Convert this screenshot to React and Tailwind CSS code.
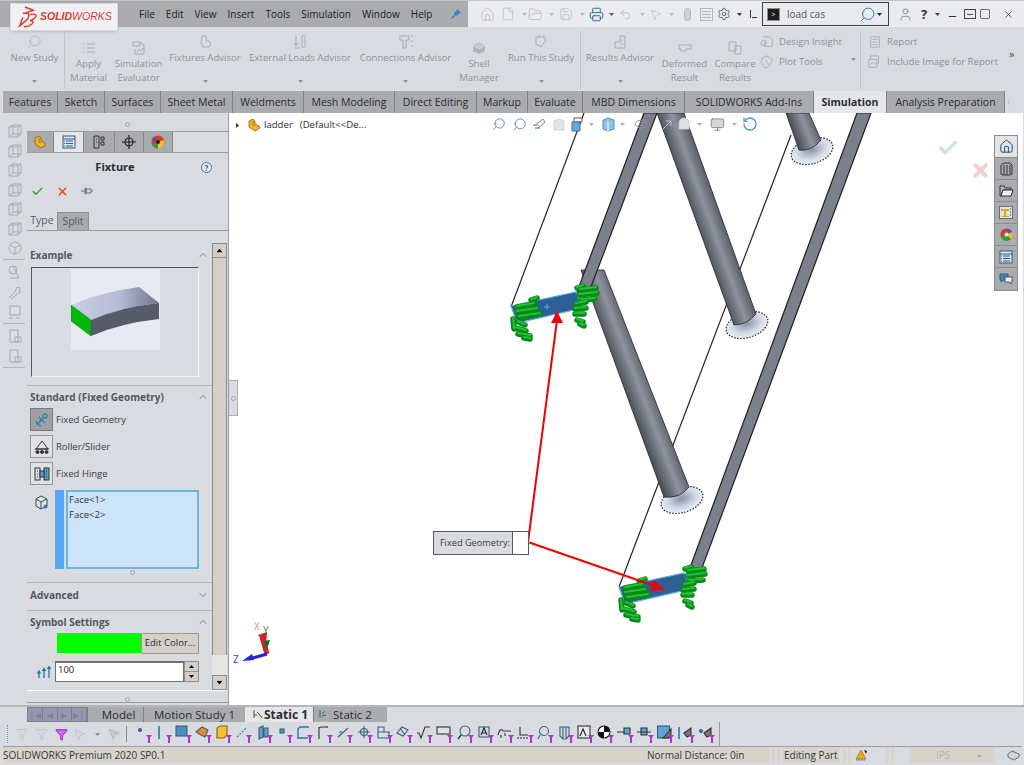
import {
  House, File, FolderOpen, Save, Printer, Undo2, MousePointer2, Settings, User, Search,
  Monitor, RotateCw, Eye, ChevronUp, ChevronDown, Check, X, Funnel, Minus, Square,
} from "lucide-react";

const Caret = ({ className = "" }) => (
  <svg width="5" height="3" viewBox="0 0 5 3" className={className}>
    <path d="M0 0h5L2.5 3z" fill="currentColor" />
  </svg>
);

const Ghost = ({ children, size = 16 }) => (
  <svg width={size} height={size} viewBox="0 0 16 16" fill="none" stroke="#a8acb2" strokeWidth="1">
    {children}
  </svg>
);

const Cube = () => (
  <Ghost>
    <path d="M2 4l4-2h8v9l-3 3H2z M2 4h9v10 M11 4l3-2 M6 2v9h8 M2 14l4-3" />
  </Ghost>
);

// ribbon big button, label on one or two lines
const RibbonBtn = ({ w, lines, icon, arrow }) => (
  <div className={`${w} h-full flex flex-col items-center text-[#8f9399] leading-[14px]`}>
    <div className={`${lines.length > 1 ? "mt-[12px] h-[17px]" : "mt-[6px] h-[17px]"} flex items-center`}>{icon}</div>
    <div className="mt-[1px] text-center whitespace-nowrap">
      {lines.map((l) => (
        <div key={l}>{l}</div>
      ))}
    </div>
    {arrow && <Caret className="mt-[15px] text-[#8f9399]" />}
  </div>
);

const RibbonSep = () => <div className="w-px h-[58px] mt-[4px] bg-[#c3c6cb]" />;

const ribbonTabs = [
  ["Features", "w-[55px]"],
  ["Sketch", "w-[47px]"],
  ["Surfaces", "w-[56px]"],
  ["Sheet Metal", "w-[72px]"],
  ["Weldments", "w-[71px]"],
  ["Mesh Modeling", "w-[91px]"],
  ["Direct Editing", "w-[82px]"],
  ["Markup", "w-[51px]"],
  ["Evaluate", "w-[55px]"],
  ["MBD Dimensions", "w-[102px]"],
  ["SOLIDWORKS Add-Ins", "w-[129px]"],
  ["Simulation", "w-[73px]"],
  ["Analysis Preparation", "w-[118px]"],
];

const TitleBar = () => (
  <div className="h-[27px] flex border-t border-[#c4c6ca] relative">
    <div className="w-[468px] bg-[#a9abaf] flex items-center text-[#1c1c1c] text-[10px] pl-[139px]">
      <div className="flex gap-[11px]">
        {["File", "Edit", "View", "Insert", "Tools", "Simulation", "Window", "Help"].map((m) => (
          <span key={m}>{m}</span>
        ))}
      </div>
      <svg width="12" height="12" viewBox="0 0 12 12" className="ml-[18px]">
        <path d="M7 1l4 4-2 .5L7 8 6 7 2 11l-1-1 4-4-1-1 2.500-2z" fill="#2a86c8" />
      </svg>
    </div>
    {/* quick access */}
    <div className="flex-1 bg-[#eaebef] flex items-center pl-[12px] text-[#b4b7bc] relative">
      <House size={15} strokeWidth={1.2} />
      <File size={14} strokeWidth={1.2} className="ml-[6px]" />
      <Caret className="ml-[7px]" />
      <FolderOpen size={15} strokeWidth={1.2} className="ml-[1px]" />
      <Caret className="ml-[6px]" />
      <Save size={14} strokeWidth={1.2} className="ml-[5px]" />
      <Caret className="ml-[7px]" />
      <Printer size={15} strokeWidth={1.6} className="ml-[4px] text-[#2f6ea8]" />
      <Caret className="ml-[5px] text-[#555]" />
      <Undo2 size={13} strokeWidth={1.4} className="ml-[5px]" />
      <Caret className="ml-[8px]" />
      <MousePointer2 size={13} strokeWidth={1.2} className="ml-[4px]" />
      <Caret className="ml-[7px]" />
      <div className="ml-[10px] w-[7px] h-[13px] rounded-full border border-[#b4b7bc] bg-[#cfd1d5]" />
      <div className="ml-[9px] w-[13px] h-[13px] border border-[#b4b7bc] flex flex-col justify-around p-[1px]">
        <div className="h-px bg-[#b4b7bc]" />
        <div className="h-px bg-[#b4b7bc]" />
        <div className="h-px bg-[#b4b7bc]" />
      </div>
      <Settings size={14} strokeWidth={1.4} className="ml-[4px] text-[#4a4d52]" />
      <Caret className="ml-[6px] text-[#333]" />
      <div className="ml-[8px] flex items-end h-[8px] gap-px">
        <div className="w-px h-[8px] bg-[#333]" />
        <div className="w-[5px] h-px bg-[#333]" />
      </div>
      {/* search box */}
      <div className="ml-[5px] w-[127px] h-[24px] border-[1.5px] border-[#3c3f44] bg-[#e9eaee] flex items-center pl-[4px] text-[#54585e] text-[10px]">
        <div className="w-[13px] h-[13px] bg-[#1d1d1d] border border-[#8b8d90] flex items-center justify-center text-white text-[7px] leading-none">
          &gt;
        </div>
        <span className="ml-[7px] w-[72px]">load cas</span>
        <Search size={17} strokeWidth={1.4} className="text-[#2b78bd] -scale-x-100" />
        <Caret className="ml-[1px] text-[#222]" />
      </div>
      <User size={15} strokeWidth={1.1} className="ml-[9px] text-[#6d7076]" />
      <span className="ml-[8px] font-bold text-[13px] text-[#333] leading-none">?</span>
      <Caret className="ml-[8px] text-[#444]" />
      <Minus size={11} strokeWidth={2.6} className="ml-[7px] text-[#333] mt-[5px]" />
      <div className="ml-[6px] w-[12px] h-[10px] border border-[#444] flex items-center justify-center">
        <div className="w-[6px] h-px bg-[#444]" />
      </div>
      <Square size={12} strokeWidth={1.4} className="ml-[3px] text-[#333]" />
      <X size={11} strokeWidth={1.6} className="ml-[12px] text-[#333]" />
    </div>
    {/* logo tab hangs over the ribbon */}
    <div className="absolute left-[10px] top-[2px] w-[108px] h-[28px] bg-[#f1f1f3] border border-[#d6d7da] shadow-sm flex items-center pl-[4px]">
      <svg width="25" height="22" viewBox="0 0 23 21" fill="none" stroke="#dd3a33" strokeWidth="1.4">
        <path d="M9 1l8 3-8 3M7 7h4c3 0 2 5 -1 7l-6 5 3-8M14 8c6-1 7 1 4 4l-4 2c4 0 4 2 -1 5l-5 1" />
      </svg>
      <span className="font-['Liberation_Sans'] italic text-[10.5px] text-[#dd3a33]">
        <b>SOLID</b>WORKS
      </span>
    </div>
  </div>
);

const Ribbon = () => (
  <div className="h-[64px] flex pl-[5px] text-[9.6px] bg-[#d8dbe0] shrink-0">
    <RibbonBtn w="w-[59px]" lines={["New Study"]} arrow icon={<Search size={15} strokeWidth={1.4} className="text-[#b4b7bc] -scale-x-100" />} />
    <RibbonSep />
    <RibbonBtn w="w-[47px]" lines={["Apply", "Material"]} icon={<Ghost><path d="M2 4h1M2 8h1M2 12h1M6 4h8M6 8h8M6 12h8" /></Ghost>} />
    <RibbonBtn w="w-[53px]" lines={["Simulation", "Evaluator"]} icon={<Ghost><path d="M2 2h7l4 3v9H4V9M2 2v4h7V2" /><path d="M6 12l2-3 2 2 2-3" /></Ghost>} />
    <RibbonBtn w="w-[80px]" lines={["Fixtures Advisor"]} arrow icon={<Ghost><path d="M5 2h4v5h3l2 3-2 3H6l-2-4z" /></Ghost>} />
    <RibbonBtn w="w-[110px]" lines={["External Loads Advisor"]} arrow icon={<Ghost><path d="M4 2v9M2 9l2 3 2-3M2 14h6M10 3a1.500 1.500 0 013 0v7a2 2 0 11-3 0z" /></Ghost>} />
    <RibbonBtn w="w-[101px]" lines={["Connections Advisor"]} arrow icon={<Ghost><path d="M2 2h9v4H8v8H5V6H2zM13 2h2M13 7h2M13 12h2" /></Ghost>} />
    <RibbonBtn w="w-[46px]" lines={["Shell", "Manager"]} icon={<svg width="14" height="14" viewBox="0 0 14 14"><path d="M7 1l6 3-6 3-6-3z" fill="#c2c5ca" /><path d="M1 5l6 3 6-3v5l-6 3-6-3z" fill="#b1b4b9" /></svg>} />
    <RibbonBtn w="w-[78px]" lines={["Run This Study"]} arrow icon={<Ghost><path d="M3 3h7l3 3-5 7-5-3z M6 1v3M10 1l2 2" /></Ghost>} />
    <RibbonSep />
    <RibbonBtn w="w-[78px]" lines={["Results Advisor"]} arrow icon={<Ghost><path d="M8 2h5v12H3V8h5zM10 5v2M10 9v2" /></Ghost>} />
    <RibbonBtn w="w-[51px]" lines={["Deformed", "Result"]} icon={<svg width="14" height="8" viewBox="0 0 14 8"><path d="M1 1h12v4H8v2H3V5H1z" fill="none" stroke="#a8acb2" /></svg>} />
    <RibbonBtn w="w-[50px]" lines={["Compare", "Results"]} icon={<Ghost><path d="M2 2h7v9H2zM8 6h6v8H8z" /></Ghost>} />
    <div className="w-[100px] flex flex-col pt-[8px] gap-[6px] text-[#8f9399] leading-[14px] relative">
      <div className="flex items-center gap-[4px]">
        <Ghost size={14}><path d="M3 2h8l3 3v8H5V8M1 9a3 3 0 116 0 3 3 0 01-6 0" /></Ghost>
        <span className="ml-[1px]">Design Insight</span>
      </div>
      <div className="flex items-center gap-[4px]">
        <Ghost size={14}><path d="M3 3l5-2 6 4-3 8-5 2-5-6z M6 5l4 6" /></Ghost>
        <span className="ml-[1px]">Plot Tools</span>
        <Caret className="absolute left-[91px] top-[31px]" />
      </div>
    </div>
    <RibbonSep />
    <div className="w-[140px] flex flex-col pt-[8px] gap-[6px] text-[#8f9399] leading-[14px] pl-[7px]">
      <div className="flex items-center">
        <Ghost size={14}><path d="M3 2h10v12H3zM5 5h6M5 8h6M5 11h6" /></Ghost>
        <span className="ml-[5px]">Report</span>
      </div>
      <div className="flex items-center">
        <Ghost size={14}><path d="M3 4V1h9v9h-2M1 5h9v9H1z M3 11l2-3 3 3" /></Ghost>
        <span className="ml-[5px] whitespace-nowrap">Include Image for Report</span>
      </div>
    </div>
    <span className="ml-[8px] mt-[19px] text-[#55585d] text-[11px]">»</span>
  </div>
);

const Tabs = () => (
  <div className="h-[22px] flex shrink-0 pl-[3px] text-[10.5px] text-[#2b2d30]">
    {ribbonTabs.map(([name, w]) => (
      <div
        key={name}
        className={`${w} flex items-center justify-center pt-px whitespace-nowrap border-r border-[#7f8185] ${
          name === "Simulation" ? "bg-[#e4e6ea] font-bold" : "bg-[#a9abaf]"
        }`}
      >
        {name}
      </div>
    ))}
    <div className="flex-1 flex items-center pl-[2px] text-[#b5b7bb] bg-[#d8dbe0]">‹</div>
  </div>
);

const SideStrip = () => (
  <div className="w-[27px] pl-[7px] flex flex-col items-start pt-[10px] shrink-0">
    <div className="flex flex-col gap-[3.5px]">
      <Cube /><Cube /><Cube /><Cube /><Cube /><Cube />
      <Ghost><circle cx="8" cy="8" r="6" /><path d="M3 5l5 3 5-3M8 8v6" /></Ghost>
    </div>
    <div className="w-[22px] h-px bg-[#b4b7bb] -ml-[4px] mt-[3px] mb-[4px]" />
    <div className="flex flex-col gap-[4px]">
      <Ghost><circle cx="6" cy="6" r="4" /><path d="M6 2l6 12H3" /></Ghost>
      <Ghost><path d="M2 14l6-6 2-5 3 1-1 3 2 1-5 3-5 4" /></Ghost>
      <Ghost><path d="M3 2h10v9H3zM2 14h4M9 14h4" /></Ghost>
    </div>
    <div className="w-[22px] h-px bg-[#b4b7bb] -ml-[4px] mt-[3px] mb-[4px]" />
    <div className="flex flex-col gap-[3.5px]">
      <Ghost><path d="M3 2h8v12H3zM8 9h6v5H8z" /></Ghost>
      <Ghost><path d="M3 2h8v12H3zM8 9h6v5H8z" /></Ghost>
    </div>
    <div className="w-[22px] h-px bg-[#b4b7bb] -ml-[4px] mt-[3px]" />
  </div>
);

const Handle = ({ className = "" }) => <div className={`w-[5px] h-[5px] rounded-full border border-[#a4a6aa] ${className}`} />;

const PartIcon = ({ size = 14 }) => (
  <svg width={size} height={size} viewBox="0 0 14 14">
    <path d="M2 3l4-2 2 2v3l4 2 1 2-5 3-6-4z" fill="#f0b429" stroke="#8a6200" strokeWidth="0.8" />
    <path d="M6 3v4l2 1" fill="none" stroke="#8a6200" strokeWidth="0.7" />
  </svg>
);

const PanelTabs = () => (
  <div className="h-[22px] border-t border-[#9c9ea2] border-b flex">
    <div className="w-[27px] bg-[#a9abaf] flex items-center justify-center border-r border-[#85878b]"><PartIcon /></div>
    <div className="w-[30px] bg-[#e4e6ea] flex items-center justify-center border-r border-[#85878b]">
      <svg width="14" height="14" viewBox="0 0 14 14" fill="none"><rect x="1" y="1" width="12" height="12" fill="#dfe7ef" stroke="#2d5c80" /><path d="M1 4h12M4 6h7M4 8.500h7M4 11h7" stroke="#2d5c80" /><path d="M2 6h1M2 8.500h1M2 11h1" stroke="#2d7fc0" /></svg>
    </div>
    <div className="w-[31px] bg-[#a9abaf] flex items-center justify-center border-r border-[#85878b]">
      <svg width="14" height="14" viewBox="0 0 14 14" fill="none" stroke="#333"><path d="M2 1h5v12H2zM9 2h3v3H9zM9 7h3v3H9zM4 4h1M4 7h1" /></svg>
    </div>
    <div className="w-[29px] bg-[#a9abaf] flex items-center justify-center border-r border-[#85878b]">
      <svg width="14" height="14" viewBox="0 0 14 14" fill="none" stroke="#222" strokeWidth="1.200"><circle cx="7" cy="7" r="4" /><path d="M7 0v14M0 7h14" /></svg>
    </div>
    <div className="w-[29px] bg-[#a9abaf] flex items-center justify-center border-r border-[#85878b]">
      <svg width="14" height="14" viewBox="0 0 14 14"><circle cx="7" cy="7" r="6.500" fill="#e03a2f" /><path d="M7 7L1 9a6.500 6.500 0 006 4.500z" fill="#3a9a3f" /><path d="M7 7l6-2a6.500 6.500 0 01-6 8.500z" fill="#f2c230" /><path d="M7 7L1 5a6.500 6.500 0 012-3.500z" fill="#2a5fc0" /><circle cx="7" cy="7" r="2" fill="#222" /></svg>
    </div>
  </div>
);

const SectionHead = ({ title, open = true }) => (
  <div className="h-[16px] flex items-center justify-between pl-[3px] pr-[3px] font-bold text-[#515862] text-[10px]">
    <span>{title}</span>
    {open ? <ChevronUp size={12} strokeWidth={1.6} className="text-[#6c7077]" /> : <ChevronDown size={12} strokeWidth={1.6} className="text-[#6c7077]" />}
  </div>
);

const OptionRow = ({ active, label, icon, className = "" }) => (
  <div className={`flex items-center pl-[3px] ${className}`}>
    <div className={`w-[23px] h-[23px] flex items-center justify-center border ${active ? "bg-[#9ea0a4] border-[#77797d]" : "bg-[#e0e2e6] border-[#94969a]"}`}>
      {icon}
    </div>
    <span className="ml-[3px] mt-[2px] text-[#3b3e42] text-[9.5px]">{label}</span>
  </div>
);

const PropertyPanel = () => (
  <div className="w-[202px] shrink-0 border-r border-[#9a9c9f] flex flex-col relative">
    <div className="h-[18px] flex items-center justify-center pt-[4px]"><Handle /></div>
    <PanelTabs />
    {/* title */}
    <div className="h-[29px] flex items-center">
      <span className="ml-[65px] w-[46px] text-center font-bold text-[11px] text-[#2b2d30]">Fixture</span>
      <div className="ml-[63px] w-[11px] h-[11px] rounded-full border border-[#4b6f8c] bg-[#e6eef4] flex items-center justify-center text-[8px] font-bold text-[#2d5c80] leading-none">?</div>
    </div>
    {/* ok cancel pin */}
    <div className="h-[18px] flex items-center pl-[4px]">
      <Check size={13} strokeWidth={2.6} className="text-[#3aa033]" />
      <X size={13} strokeWidth={2.6} className="ml-[12px] text-[#e8401c]" />
      <svg width="12" height="8" viewBox="0 0 12 8" className="ml-[12px]"><path d="M0 4h4M4 1h1v6H4zM5 2h5v4H5zM10 4h2" stroke="#6f7378" fill="none" /></svg>
    </div>
    {/* type split */}
    <div className="mt-[11px] h-[20px] flex border-b border-[#9c9ea2] text-[10.5px] pt-px">
      <div className="w-[30px] flex items-center justify-center text-[#555a60]">Type</div>
      <div className="w-[32px] bg-[#a9abaf] border border-[#8f9195] border-b-0 flex items-center justify-center text-[#5a5e64]">Split</div>
    </div>
    <div className="flex flex-1">
      {/* options column */}
      <div className="w-[185px] flex flex-col">
        <div className="mt-[16px]"><SectionHead title="Example" /></div>
        <div className="ml-[4px] mt-[4px] w-[168px] h-[110px] border border-[#f0f1f3] border-l-[#55585c] border-t-[#55585c] flex justify-center items-start pt-px">
          <svg width="89" height="81" viewBox="0 0 89 81">
            <defs>
              <linearGradient id="blocktop" x1="0" x2="1" y1="0" y2="0">
                <stop offset="0" stopColor="#c9cde6" />
                <stop offset="0.55" stopColor="#b7bbd6" />
                <stop offset="1" stopColor="#6f7488" />
              </linearGradient>
            </defs>
            <rect width="89" height="81" fill="#e8eaf3" />
            <path d="M0 36Q30 23 68 18L88 34Q50 38 20 51z" fill="url(#blocktop)" />
            <path d="M20 51Q50 38 88 34V50Q50 54 20 67z" fill="#575b69" />
            <path d="M0 36L20 51V67L0 52z" fill="#00b80a" stroke="#0a7a10" strokeWidth="0.5" />
          </svg>
        </div>
        <div className="mt-[8px] h-px bg-[#b5b7bb]" />
        <div className="mt-[3px]"><SectionHead title="Standard (Fixed Geometry)" /></div>
        <OptionRow
          active
          label="Fixed Geometry"
          className="mt-[3px]"
          icon={<svg width="16" height="16" viewBox="0 0 16 16" fill="none" stroke="#2a7fb5" strokeWidth="1.300"><circle cx="11" cy="4" r="2" /><path d="M9 6L3 13M5 5l6 6M2 9q1 4 5 5" /></svg>}
        />
        <OptionRow
          label="Roller/Slider"
          className="mt-[4px]"
          icon={<svg width="16" height="16" viewBox="0 0 16 16" fill="none" stroke="#333"><path d="M8 2L2 10h12z" /><path d="M1 10h14" /><circle cx="3.500" cy="13" r="1.500" fill="#333" /><circle cx="8" cy="13" r="1.500" fill="#333" /><circle cx="12.500" cy="13" r="1.500" fill="#333" /></svg>}
        />
        <OptionRow
          label="Fixed Hinge"
          className="mt-[4px]"
          icon={<svg width="16" height="16" viewBox="0 0 16 16" fill="none" stroke="#333"><rect x="1" y="2" width="5" height="12" /><rect x="10" y="2" width="5" height="12" fill="#5e9fc6" /><rect x="6" y="5" width="4" height="6" fill="#5e9fc6" /><path d="M3 5h1M3 8h1M3 11h1M12 5h1M12 8h1M12 11h1" /></svg>}
        />
        {/* selection list */}
        <div className="mt-[5px] flex h-[79px]">
          <div className="w-[28px] pl-[7px] pt-[5px]">
            <svg width="15" height="15" viewBox="0 0 15 15" fill="none" stroke="#3c4650"><path d="M2 4l5-3 6 3v7l-6 3-5-3z" fill="#dfe4ea" /><path d="M2 4l5 3 6-3M7 7v7" /><circle cx="11.500" cy="11.500" r="2" fill="#2a78b0" stroke="none" /></svg>
          </div>
          <div className="w-[9px] bg-[#57a9f5]" />
          <div className="ml-[2px] w-[133px] border-2 border-[#69b6e6] bg-[#cde3f8] pl-[1px] text-[9.5px] leading-[15px] text-[#32353a]">
            <div>Face&lt;1&gt;</div>
            <div>Face&lt;2&gt;</div>
          </div>
        </div>
        <div className="h-[7px] flex items-center pl-[103px]"><Handle className="w-[4px] h-[4px]" /></div>
        <div className="mt-[6px] h-px bg-[#b5b7bb]" />
        <div className="mt-[4px]"><SectionHead title="Advanced" open={false} /></div>
        <div className="mt-[7px] h-px bg-[#b5b7bb]" />
        <div className="mt-[3px]"><SectionHead title="Symbol Settings" /></div>
        <div className="ml-[30px] mt-[3px] flex h-[21px]">
          <div className="w-[84px] h-[20px] bg-[#00ff00]" />
          <div className="w-[58px] bg-[#d4d0c8] border border-[#9a9892] rounded-[1px] flex items-center justify-center text-[9.5px] text-[#2b2d30]">Edit Color...</div>
        </div>
        <div className="flex mt-[7px] h-[21px] items-center">
          <svg width="14" height="12" viewBox="0 0 14 12" fill="none" stroke="#1d6f9c" strokeWidth="1.200" className="ml-[10px]"><path d="M2 12V6M0.500 7.500L2 5l1.500 2.500M7 12V4M5.500 5L7 2.500 8.500 5M12 12V1M10.500 3L12 .5 13.500 3" /></svg>
          <div className="ml-[4px] w-[129px] h-[21px] bg-white border border-[#6f7175] border-t-2 flex items-center pl-[2px] pb-[3px] text-[9.5px] text-[#222]">100</div>
          <div className="w-[15px] h-[21px] flex flex-col border border-[#8d8f93]">
            <div className="flex-1 bg-[#d4d0c8] flex items-center justify-center border-b border-[#8d8f93] text-black"><Caret className="rotate-180" /></div>
            <div className="flex-1 bg-[#d4d0c8] flex items-center justify-center text-black"><Caret /></div>
          </div>
        </div>
      </div>
      {/* scrollbar */}
      <div className="mt-[12px] w-[15px] flex flex-col">
        <div className="h-[15px] bg-[#d4d0c8] border border-[#8a8c8f] flex items-center justify-center text-black"><Caret className="rotate-180 scale-125" /></div>
        <div className="flex-1 bg-[#d4d0c8] border-x border-[#8a8c8f]" />
        <div className="h-[20px] bg-[#e6e6e2]" />
        <div className="h-[15px] bg-[#d4d0c8] border border-[#8a8c8f] flex items-center justify-center text-black"><Caret className="scale-125" /></div>
      </div>
    </div>
    <div className="h-px bg-white mb-[5px] mr-[2px]" />
    <div className="h-[6px] flex items-center justify-center"><Handle className="w-[4px] h-[4px]" /></div>
    <div className="h-[3px] border-t border-[#9c9ea2]" />
  </div>
);

const anchorLines = [
  [518, 307, 535, 304], [518, 312, 538, 309], [520, 317, 541, 314], [532, 300, 538, 298],
  [514, 319, 515, 329], [519, 322, 526, 325], [516, 328, 527, 331], [519, 334, 531, 336], [525, 338, 531, 339],
  [581, 290, 597, 288], [580, 295, 598, 293], [582, 300, 596, 299], [578, 288, 584, 286],
  [577, 304, 587, 302], [576, 309, 587, 308], [576, 314, 585, 314], [578, 320, 584, 322], [581, 324, 585, 326],
];

const Rung = ({ dx = 0, dy = 0, plus }) => (
  <g transform={`translate(${dx} ${dy})`}>
    <path d="M512 306L577 292L583 308L518 323z" fill="#2d5f97" stroke="#63ace8" strokeWidth="1.200" />
    {plus && <path d="M548 304v6M545 307h6" stroke="#6fb0ea" strokeWidth="0.8" />}
    {anchorLines.map((l, i) => (
      <line key={i} x1={l[0]} y1={l[1]} x2={l[2]} y2={l[3]} stroke="#0a8a18" strokeWidth="5.500" strokeLinecap="round" />
    ))}
    {anchorLines.map((l, i) => (
      <line key={i} x1={l[0]} y1={l[1] - 1} x2={l[2]} y2={l[3] - 1} stroke="#1fc430" strokeWidth="2" strokeLinecap="round" />
    ))}
  </g>
);

const Foot = ({ cx, cy, id }) => (
  <g transform={`rotate(-17 ${cx} ${cy})`}>
    <ellipse cx={cx} cy={cy} rx="21.500" ry="12.500" fill={`url(#${id})`} stroke="#222" strokeWidth="1.200" strokeDasharray="1.500 1.500" />
  </g>
);

const Model = () => (
  <svg className="absolute inset-0" width="793" height="592" viewBox="230 113 793 592">
    <defs>
      <linearGradient id="tube1" gradientUnits="userSpaceOnUse" x1="697" y1="225" x2="722" y2="216">
        <stop offset="0" stopColor="#4a4e58" />
        <stop offset="0.55" stopColor="#8f93a0" />
        <stop offset="1" stopColor="#5a5e69" />
      </linearGradient>
      <linearGradient id="tube2" gradientUnits="userSpaceOnUse" x1="790" y1="122" x2="813" y2="113">
        <stop offset="0" stopColor="#4a4e58" />
        <stop offset="0.55" stopColor="#8f93a0" />
        <stop offset="1" stopColor="#5a5e69" />
      </linearGradient>
      <linearGradient id="tube3" gradientUnits="userSpaceOnUse" x1="623" y1="385" x2="649" y2="375">
        <stop offset="0" stopColor="#4a4e58" />
        <stop offset="0.55" stopColor="#8f93a0" />
        <stop offset="1" stopColor="#5a5e69" />
      </linearGradient>
      <radialGradient id="foot1" cx="0.5" cy="0.45" r="0.6">
        <stop offset="0" stopColor="#8a93a8" />
        <stop offset="0.6" stopColor="#d5dbe8" />
        <stop offset="1" stopColor="#f2f4f8" />
      </radialGradient>
    </defs>
    {/* thin edge lines */}
    <path d="M585 113L512 307M792 135L620 587" stroke="#222" strokeWidth="1.200" fill="none" />
    <Foot cx={813} cy={151} id="foot1" />
    <Foot cx={748} cy={325} id="foot1" />
    <Foot cx={683} cy={500} id="foot1" />
    {/* tubes */}
    <path d="M658 113H685L757 314Q748 325 735 325z" fill="url(#tube1)" stroke="#24262a" strokeWidth="0.800" />
    <path d="M787 113H810L822 140Q812 152 800 150z" fill="url(#tube2)" stroke="#24262a" strokeWidth="0.800" />
    <path d="M582 270L605 270L690 487Q681 499 665 497z" fill="url(#tube3)" stroke="#24262a" strokeWidth="0.800" />
    {/* rails */}
    <path d="M645 113H658L590 292L578 292z" fill="#7b808c" stroke="#1e1f22" strokeWidth="1.200" />
    <path d="M858 113H872L700 576L688 576z" fill="#7b808c" stroke="#1e1f22" strokeWidth="1.200" />
    <Rung plus />
    <Rung dx={108} dy={281} />
    {/* leaders */}
    <path d="M529 542L558 320M529 542L653 585" stroke="#f00000" strokeWidth="2" fill="none" />
    <path d="M558 311L552 323H564z" fill="#f00000" />
    <path d="M666 590L651.400 590.500L654.700 580z" fill="#f00000" />
    <circle cx="529" cy="542" r="1.500" fill="#fff" />
    {/* triad */}
    <path d="M268 654L263 637" stroke="#d0222a" strokeWidth="5" fill="none" />
    <path d="M259 635L268 632L267 645z" fill="#d0222a" />
    <path d="M265 641L271 640L268 649z" fill="#136b2a" />
    <path d="M268 654L250 659" stroke="#2428d8" strokeWidth="3" fill="none" />
    <path d="M243 661L253 654L255 660z" fill="#2428d8" />
  </svg>
);

const HeadsUp = () => (
  <div className="absolute left-[263px] top-[3px] flex items-center text-[#a9adb3]">
    <Search size={14} strokeWidth={1.6} className="text-[#5a86a8] -scale-x-100" />
    <Search size={15} strokeWidth={1.400} className="ml-[6px] text-[#5a86a8] -scale-x-100" />
    <svg width="15" height="14" viewBox="0 0 15 14" className="ml-[5px]" fill="none" stroke="#7f8f9c"><path d="M2 9l9-7 2 3-7 6M1 8h6" /><path d="M3 11h5" stroke="#4f9fd0" strokeWidth="1.500" /></svg>
    <svg width="12" height="13" viewBox="0 0 12 13" className="ml-[6px]" fill="#e3e5e8" stroke="#cfd2d6"><path d="M1 3l5-2 5 2v9H1z" /></svg>
    <svg width="14" height="15" viewBox="0 0 14 15" className="ml-[5px]"><path d="M4 1h8v4H4z" fill="#fff" stroke="#555" /><path d="M2 5h8v9H2z" fill="#6aa9d8" stroke="#3a6f98" /></svg>
    <Caret className="ml-[5px]" />
    <svg width="13" height="15" viewBox="0 0 13 15" className="ml-[8px]"><path d="M1 3l5-2 6 2v9l-6 2-5-2z" fill="#8fc3e4" stroke="#5c8fb4" /><path d="M6 4v10" stroke="#fff" /></svg>
    <Caret className="ml-[5px]" />
    <Eye size={14} strokeWidth={1.600} className="ml-[9px] text-[#8f9398]" />
    <div className="w-[54px] flex items-center justify-end">
      <svg width="13" height="13" viewBox="0 0 13 13" fill="none" stroke="#c8cacd" className="mr-[3px]"><path d="M2 11l8-8M5 3h5v5" /></svg>
      <svg width="14" height="14" viewBox="0 0 14 14" fill="#dfe1e4" stroke="#c8cacd"><path d="M7 1a5 5 0 015 5v6H2V6a5 5 0 015-5z" /></svg>
      <Caret className="ml-[6px]" />
    </div>
    <Monitor size={15} strokeWidth={1.200} className="ml-[8px] text-[#6e7378]" fill="#d5d7da" />
    <Caret className="ml-[7px]" />
    <RotateCw size={16} strokeWidth={2} className="ml-[5px] text-[#4d9cc9] -scale-y-100 rotate-180" />
  </div>
);

const tabCell = "h-[22px] border-b border-[#8a8c90] flex items-center justify-center";

const TaskTabs = () => (
  <div className="absolute left-[765px] top-[22px] w-[24px] bg-[#a9abaf] border border-[#8a8c90]">
    <div className={`${tabCell} bg-[#e3e5e9]`}><House size={15} strokeWidth={1.600} className="text-[#17506f]" /></div>
    <div className={tabCell}>
      <svg width="13" height="14" viewBox="0 0 13 14" fill="none" stroke="#333"><path d="M1 3l3-2h6l2 2v9l-2 1H3l-2-1zM4 3v10M7 3v10M10 3v9" /></svg>
    </div>
    <div className={tabCell}>
      <svg width="15" height="13" viewBox="0 0 15 13" stroke="#333"><path d="M1 2h4l1 2h6v2H4L2 12H1z" fill="#b8babd" /><path d="M4 6h10l-2 6H2z" fill="#eceef0" /></svg>
    </div>
    <div className={tabCell}>
      <svg width="14" height="13" viewBox="0 0 14 13"><rect x="0.500" y="0.500" width="13" height="12" fill="#e0e2e5" stroke="#6a6c70" /><path d="M2 3h8v2H7v5h3v1H3v-1h2V5H2z" fill="#e0aa1c" /><path d="M11 3h1M11 6h1M11 9h1" stroke="#333" /></svg>
    </div>
    <div className={tabCell}>
      <svg width="13" height="13" viewBox="0 0 13 13"><circle cx="6.500" cy="6.500" r="6" fill="#d8342c" /><path d="M6.500 6.500L1 9a6 6 0 0010 2z" fill="#2ea13a" /><path d="M6.500 6.500L11 11a6 6 0 001-7z" fill="#f1c21f" /><path d="M6.500 6.500L12 4a6 6 0 00-3.500-3z" fill="#2f66cf" /><circle cx="6.500" cy="6.500" r="2" fill="#f0f0f0" /></svg>
    </div>
    <div className={tabCell}>
      <svg width="14" height="14" viewBox="0 0 14 14" fill="none"><rect x="1" y="1" width="12" height="12" fill="#dfe7ef" stroke="#2d5c80" /><path d="M1 4h12M4 6h7M4 8.500h7M4 11h7" stroke="#2d5c80" /><path d="M2 6h1M2 8.500h1M2 11h1" stroke="#2d7fc0" /></svg>
    </div>
    <div className="h-[22px] flex items-center justify-center">
      <svg width="14" height="12" viewBox="0 0 14 12"><path d="M1 1h8v6H4L2 9V7H1z" fill="#3d87b8" stroke="#2d5c80" /><path d="M6 4h7v5h-1v2l-2-2H6z" fill="#f2f3f5" stroke="#555" /></svg>
    </div>
  </div>
);

const Viewport = () => (
  <div className="flex-1 bg-white relative">
    <Model />
    {/* panel splitter tab */}
    <div className="absolute left-0 top-[267px] w-[9px] h-[36px] bg-[#d8dbe0] border border-l-0 border-[#b0b2b6] flex items-center justify-center">
      <Handle className="w-[4px] h-[4px]" />
    </div>
    <div className="absolute left-[6px] top-[5px] flex items-center text-[9.6px] text-[#2b2d30]">
      <Caret className="-rotate-90 text-[#333]" />
      <div className="ml-[7px]"><PartIcon /></div>
      <span className="ml-[3px]">ladder</span>
      <span className="ml-[7px]">(Default&lt;&lt;De...</span>
    </div>
    <HeadsUp />
    {/* confirmation corner */}
    <Check size={22} strokeWidth={4} className="absolute left-[708px] top-[24px] text-[#cfe8cf]" />
    <X size={21} strokeWidth={4.500} className="absolute left-[741px] top-[47px] text-[#f3cfcf]" />
    <TaskTabs />
    {/* callout on the leaders */}
    <div className="absolute left-[204px] top-[418px] w-[96px] h-[24px] border border-[#55585c] flex text-[9.2px] text-[#3b3e42]">
      <div className="w-[79px] bg-[#d8dbe0] border-r border-[#55585c] flex items-center justify-end pr-[2px] whitespace-nowrap">Fixed Geometry:</div>
      <div className="flex-1 bg-white" />
    </div>
    {/* triad labels */}
    <span className="absolute left-[25px] top-[508px] text-[10px] leading-none text-[#e88a8a]">X</span>
    <span className="absolute left-[34px] top-[512px] text-[10px] leading-none text-[#2a8a3a]">Y</span>
    <span className="absolute left-[4px] top-[541px] text-[10px] leading-none text-[#3a3ae0]">Z</span>
  </div>
);

const navBtn = "w-[15px] h-full border-r border-[#7d7f8d] flex items-center justify-center text-[#7c7f95]";

const BottomTabs = () => (
  <div className="h-[17px] border-t-2 border-[#b4b6ba] flex pl-[27px] text-[11.5px] shrink-0 text-[#2b2d30]">
    <div className="w-[61px] flex bg-[#9598ad] border border-[#7d7f8d]">
      <div className={navBtn}>|◂</div>
      <div className={navBtn}>◂</div>
      <div className={navBtn}>▸</div>
      <div className={navBtn}>▸|</div>
    </div>
    <div className="w-[56px] bg-[#a9abaf] border-r border-[#7f8185] flex items-center justify-center pl-[6px]">Model</div>
    <div className="w-[101px] bg-[#a9abaf] flex items-center justify-center">Motion Study 1</div>
    <div className="w-[68px] bg-[#e4e6ea] flex items-center pl-[8px] font-bold text-[12px] gap-[1px] whitespace-nowrap">
      <svg width="10" height="9" viewBox="0 0 10 9" fill="none" stroke="#5b4a2a" className="shrink-0"><path d="M1 0v8M4 2l2 2 3 4M1 5h3" /></svg>
      Static 1
    </div>
    <div className="w-[74px] bg-[#a9abaf] border-l border-[#7f8185] flex items-center pl-[5px] gap-[6px]">
      <svg width="8" height="9" viewBox="0 0 8 9" fill="none" stroke="#3d5f7a"><path d="M1 0v8M3 4l3-3M3 6l4-1" /></svg>
      Static 2
    </div>
  </div>
);

const Flag = ({ children }) => (
  <div className="w-[20.1px] h-[18px] relative shrink-0">
    <svg width="15" height="15" viewBox="0 0 15 15" fill="none" stroke="#37637f" strokeWidth="1.100" className="absolute left-[1px] top-0">
      {children}
    </svg>
    <svg width="6" height="8" viewBox="0 0 6 8" className="absolute left-[12px] top-[10px]">
      <path d="M0 0h6L4 2.500V8H2V2.500z" fill="#b62fd6" />
    </svg>
  </div>
);

const flags = [
  <circle key="a" cx="5" cy="5" r="1.500" fill="#2a78b0" />,
  <path key="b" d="M4 1v13" strokeWidth="1.600" stroke="#2a78b0" />,
  <rect key="c" x="1" y="1" width="11" height="10" fill="#4a8ec0" />,
  <path key="d" d="M1 7l6-5 6 3-3 7-4-2z" fill="#e88a1e" />,
  <path key="e" d="M2 3l3-2h7v9l-3 3H2z" fill="#f2c23c" stroke="#8a6200" />,
  <path key="f" d="M2 12L12 2" strokeDasharray="2 1.500" stroke="#2a78b0" />,
  <path key="g" d="M3 3l4-2v11l-4 2zM8 3h4v9H8z" fill="#6a9ec2" />,
  <rect key="h" x="4" y="4" width="4" height="4" fill="#4a8ec0" />,
  <path key="i" d="M13 2H4L2 4v9h10" stroke="#2a78b0" strokeWidth="1.400" />,
  <path key="j" d="M3 14V3l2-1h6M3 2v2M11 1v2" stroke="#333" />,
  <path key="k" d="M2 12L12 3M3 7h3" />,
  <g key="l"><circle cx="8" cy="7" r="3.500" /><path d="M8 1v12M2 7h12" /></g>,
  <path key="m" d="M2 2h6v5h5v6H2zM2 7h12" />,
  <path key="n" d="M1 8l5-6 6 3-5 6z M4 3l5 7" />,
  <path key="o" d="M1 8h2l2 5 4-11h5" stroke="#333" />,
  <rect key="p" x="1" y="2" width="13" height="7" fill="#dfe3e8" stroke="#333" />,
  <g key="q"><circle cx="8" cy="6" r="5" /><path d="M4 10l-3 4" stroke="#333" strokeWidth="1.600" /></g>,
  <g key="r"><rect x="2" y="2" width="10" height="10" /><path d="M4 10l3-7 3 7M5 8h4" stroke="#222" /></g>,
  <path key="s" d="M1 10q2-8 5-4h8M4 10v3M8 8v3" stroke="#333" />,
  <path key="t" d="M3 2v8h8M1 12v2M4 12v2M7 12v2M10 12v2" stroke="#333" />,
  <g key="u"><circle cx="7" cy="6" r="4.500" /><path d="M3 10l-2 4" /></g>,
  <path key="v" d="M3 2h9v9l-3 3H6l-3-3zM6 2v11M9 2v11" />,
  <g key="w"><rect x="1" y="1" width="12" height="12" fill="#e8eaee" stroke="#333" /><path d="M3 11l3-7 3 7" stroke="#222" /></g>,
  <g key="x"><circle cx="7" cy="7" r="6" fill="#fff" stroke="#111" /><path d="M7 7V1a6 6 0 016 6zM7 7v6a6 6 0 01-6-6z" fill="#111" stroke="none" /></g>,
  <path key="y" d="M0 7h7M7 3h6v6H7z" fill="#5ba6d6" stroke="#333" />,
  <path key="z" d="M0 7h14M4 3h6v7H4z" fill="#5ba6d6" stroke="#333" />,
  <g key="aa"><rect x="0.500" y="1" width="12" height="12" fill="#5ba6d6" stroke="#2a5f85" /><path d="M6 13L14 4v7l-4 2z" fill="#777" stroke="#333" /></g>,
];

const BottomBar = () => (
  <div className="h-[24px] flex items-center pl-[6px] shrink-0">
    <div className="w-px h-[18px] border-l border-dotted border-[#8a8c90] ml-[1px]" />
    <Funnel size={12} strokeWidth={1.200} className="ml-[8px] text-[#b4b7bb]" />
    <Funnel size={13} strokeWidth={1.200} className="ml-[7px] text-[#b4b7bb]" />
    <Funnel size={13} strokeWidth={2} className="ml-[7px] text-[#b62fd6]" fill="#cf6ce8" />
    <MousePointer2 size={13} strokeWidth={1.200} className="ml-[5px] text-[#b4b7bb]" />
    <Caret className="ml-[9px] text-[#8f9399]" />
    <MousePointer2 size={14} strokeWidth={1.200} className="ml-[7px] text-[#a9adb2]" fill="#c8cacd" />
    <div className="w-px h-[16px] bg-[#8a8c90] ml-[5px] mr-[7px]" />
    <div className="flex">
      {flags.map((f, i) => (
        <Flag key={i}>{f}</Flag>
      ))}
      <Flag><path d="M1 2v12" stroke="#2a78b0" strokeWidth="1.600" /><path d="M6 8l7-5v7l-4 2z" fill="#777" stroke="#333" /></Flag>
      <Flag><circle cx="3" cy="6" r="1.500" fill="#2a78b0" /><path d="M6 8l7-5v7l-4 2z" fill="#777" stroke="#333" /></Flag>
    </div>
    <div className="w-px h-[24px] bg-[#9a9c9f] ml-[2px]" />
  </div>
);

const Stripes = ({ w }) => (
  <div className={`${w} flex gap-[2px] bg-[#d8dbe0] justify-center`}>
    <div className="w-[3px] bg-[#d8d4cc]" />
    <div className="w-[3px] bg-[#d8d4cc]" />
  </div>
);

const StatusBar = () => (
  <div className="h-[17px] border-t border-[#9c9ea2] flex text-[10px] text-[#33363a] bg-[#d8d4cc] ml-[3px] mr-[2px] shrink-0">
    <span className="w-[642px] flex items-center whitespace-nowrap">SOLIDWORKS Premium 2020 SP0.1</span>
    <span className="w-[125px] flex items-center pl-[2px] whitespace-nowrap">Normal Distance: 0in</span>
    <Stripes w="w-[12px]" />
    <span className="w-[58px] flex items-center pl-[2px] whitespace-nowrap">Editing Part</span>
    <Stripes w="w-[14px]" />
    <div className="w-[16px] flex items-center justify-center bg-[#d8dbe0]">
      <svg width="12" height="12" viewBox="0 0 12 12"><path d="M5 1l5 9H0z" fill="#f0a818" stroke="#9a6a00" strokeWidth="0.600" /><path d="M8 1l3 1-1 3z" fill="#222" /><path d="M0 11h10" stroke="#2a5f9a" strokeDasharray="1.500 1" /></svg>
    </div>
    <Stripes w="w-[40px]" />
    <span className="w-[85px] flex items-center text-[#b5b3ac] gap-[27px] pl-[26px]">
      IPS
      <Caret className="rotate-180 text-[#a8a69f]" />
    </span>
    <div className="flex-1 flex items-center justify-end pr-[2px] bg-[#d8dbe0]">
      <svg width="13" height="11" viewBox="0 0 13 11" fill="#d2d4d8" stroke="#6a6c70"><path d="M1 4l4-3 7 3v3l-5 3-6-3z" /></svg>
    </div>
  </div>
);

export default function App() {
  return (
    <div className="w-[1024px] h-[765px] overflow-hidden bg-[#d8dbe0] flex flex-col font-['Open_Sans',sans-serif] relative">
      <TitleBar />
      <Ribbon />
      <Tabs />
      <div className="h-[592px] flex shrink-0">
        <SideStrip />
        <PropertyPanel />
        <Viewport />
        <div className="w-[1px] bg-[#d8dbe0]" />
      </div>
      <BottomTabs />
      <BottomBar />
      <StatusBar />
    </div>
  );
}
